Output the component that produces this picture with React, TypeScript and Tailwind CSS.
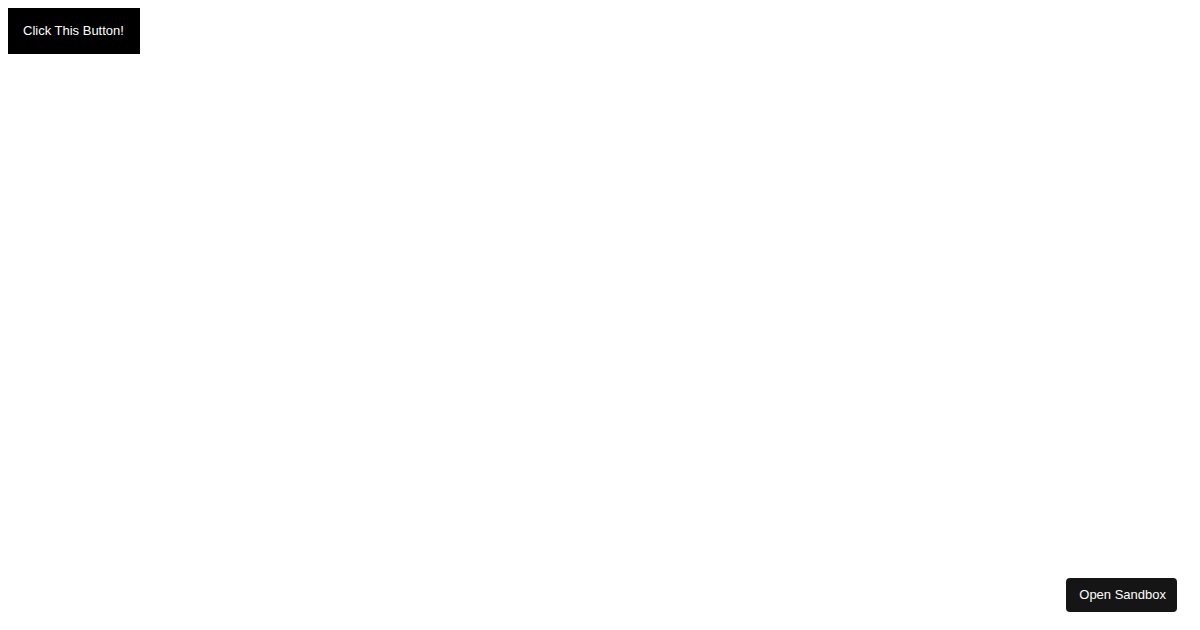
export default function App() {
  return (
    <div className="min-h-screen bg-white font-['Liberation_Sans',Arial,sans-serif]">
      <button className="m-2 bg-black py-[15px] pl-[15px] pr-4 text-[13px] leading-4 text-white">
        Click This Button!
      </button>

      <button className="fixed bottom-[18px] right-[23px] rounded bg-[#151515] py-[9px] pl-[13px] pr-[11px] text-[13px] leading-4 text-white">
        Open Sandbox
      </button>
    </div>
  );
}
